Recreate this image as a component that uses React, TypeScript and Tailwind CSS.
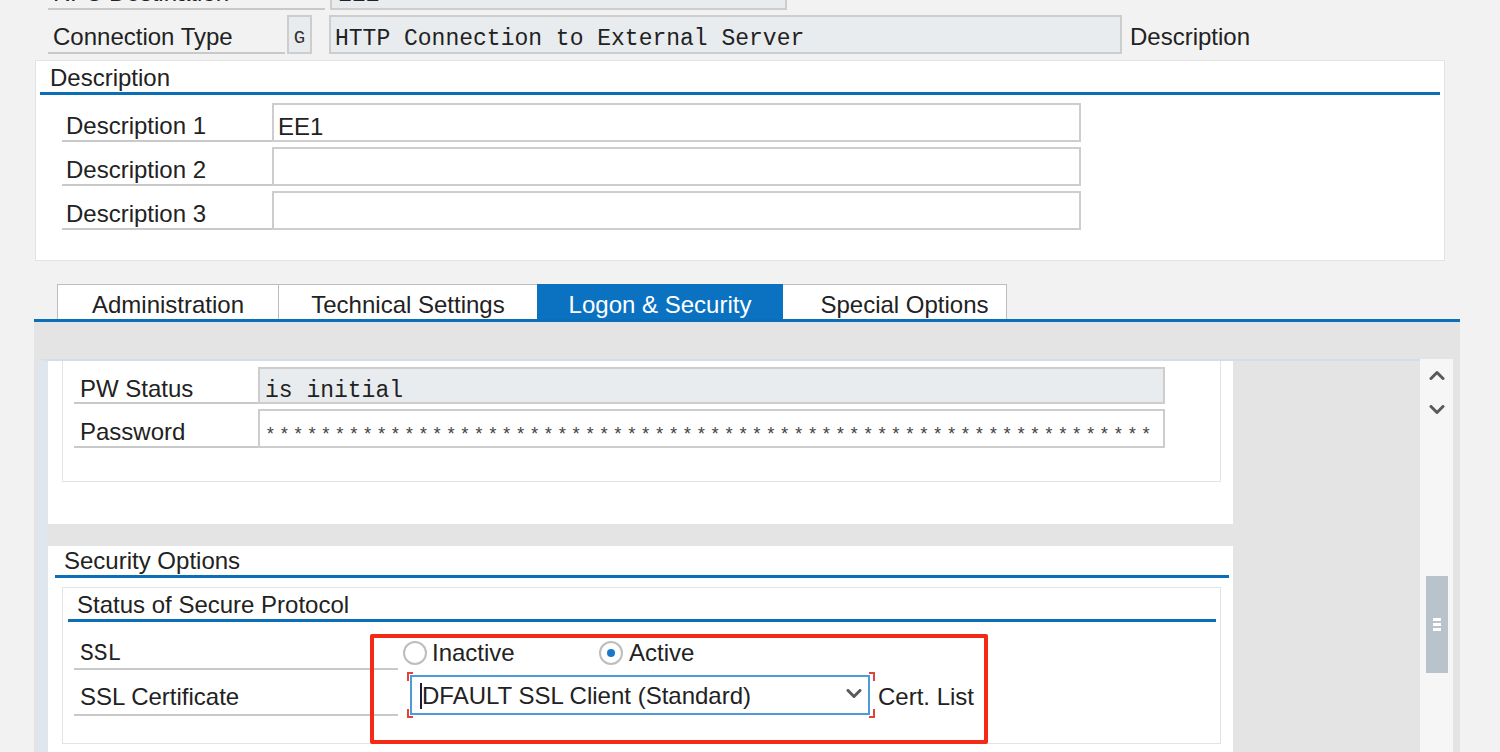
import React from "react";

const mono = "font-['Liberation_Mono','Courier_New',monospace]";

function Chevron({ up }: { up?: boolean }) {
  return (
    <svg width="16" height="10" viewBox="0 0 16 10" fill="none">
      <path
        d={up ? "M2 8.5 L8 2.5 L14 8.5" : "M2 1.5 L8 7.5 L14 1.5"}
        stroke="#5a5a5a"
        strokeWidth="3"
        strokeLinecap="round"
        strokeLinejoin="round"
      />
    </svg>
  );
}

export default function App() {
  const stars = "*".repeat(64);
  return (
    <div className="relative w-[1500px] h-[752px] overflow-hidden bg-[#f2f2f2] font-['Liberation_Sans',Arial,sans-serif] text-[24px] leading-none text-[#222]">
      <div className="flex flex-col h-full">
        {/* header rows */}
        <div className="pl-[48px] -mt-[29px] flex flex-col gap-[5px]">
          <div className="flex h-[39px]">
            <div className="w-[277px] border-b-2 border-[#c9c9c9] pl-[5px] pt-[6px] flex items-center">RFC Destination</div>
            <div className={`ml-[5px] w-[457px] bg-[#e9ecef] border-2 border-[#cdcdcd] flex items-center pl-[6px] pt-[10px] text-[23px] ${mono}`}>EE1</div>
          </div>
          <div className="flex h-[39px]">
            <div className="w-[237px] border-b-2 border-[#c9c9c9] pl-[5px] pt-[6px] flex items-center">Connection Type</div>
            <div className={`ml-[2px] w-[25px] bg-[#e9ecef] border-2 border-[#cdcdcd] flex items-center justify-center pt-[8px] text-[19px] text-[#333] ${mono}`}>G</div>
            <div className={`ml-[17px] w-[793px] bg-[#e9ecef] border-2 border-[#cdcdcd] flex items-center pl-[4px] pt-[10px] text-[23px] ${mono}`}>HTTP Connection to External Server</div>
            <div className="ml-[8px] pt-[4px] flex items-center">Description</div>
          </div>
        </div>

        {/* Description group */}
        <div className="mt-[6px] ml-[35px] w-[1410px] h-[201px] shrink-0 bg-white border border-[#e3e3e3]">
          <div className="h-[31px] pl-[14px] pt-[2px] flex items-center">Description</div>
          <div className="mx-[4px] h-[3px] bg-[#0b6fb8]" />
          <div className="mt-[8px] pl-[26px] flex flex-col gap-[5px]">
            {["Description 1", "Description 2", "Description 3"].map((l, i) => (
              <div key={l} className="flex h-[39px]">
                <div className="w-[210px] border-b-2 border-[#c9c9c9] pl-[4px] pt-[8px] flex items-center">{l}</div>
                <div className="w-[809px] border-2 border-[#cdcdcd] bg-white pl-[4px] pt-[8px] flex items-center">{i === 0 ? "EE1" : ""}</div>
              </div>
            ))}
          </div>
        </div>

        {/* tabs */}
        <div className="mt-[23px] ml-[34px] w-[1426px] border-b-[3px] border-[#0b6fb8] pl-[23px] flex shrink-0">
          <div className="w-[221px] h-[35px] pt-[6px] bg-white border-t border-l border-[#bdbdbd] flex items-center justify-center">Administration</div>
          <div className="w-[259px] h-[35px] pt-[6px] bg-white border-t border-l border-[#bdbdbd] flex items-center justify-center">Technical Settings</div>
          <div className="w-[246px] h-[35px] pt-[6px] bg-[#0b72c2] text-white flex items-center justify-center">Logon &amp; Security</div>
          <div className="w-[224px] h-[35px] pt-[6px] bg-white border-t border-r border-[#bdbdbd] flex items-center justify-center pl-[20px]">Special Options</div>
        </div>

        {/* tab body */}
        <div className="ml-[34px] w-[1426px] flex-1 bg-[#e4e4e4] pt-[37px] pl-[4px] flex">
          <div className="w-[1382px] border-t-2 border-l-[10px] border-t-[#d2dfeb] border-l-[#dfe6ed] flex flex-col">
            {/* card 1 */}
            <div className="w-[1185px] h-[163px] bg-white shrink-0">
              <div className="ml-[14px] w-[1159px] h-[121px] border-l border-r border-b border-[#e3e3e3] pt-[6px] pl-[11px] flex flex-col gap-[5px]">
                <div className="flex h-[37px]">
                  <div className="w-[184px] border-b-2 border-[#c9c9c9] pl-[6px] pt-[8px] flex items-center">PW Status</div>
                  <div className={`w-[907px] bg-[#e9ecef] border-2 border-[#cdcdcd] pl-[5px] pt-[12px] flex items-center text-[23px] ${mono}`}>is initial</div>
                </div>
                <div className="flex h-[39px]">
                  <div className="w-[184px] border-b-2 border-[#c9c9c9] pl-[6px] pt-[9px] flex items-center">Password</div>
                  <div className={`w-[907px] bg-white border-2 border-[#cdcdcd] pl-[5px] flex items-center pt-[12px] text-[18px] tracking-[3.1px] text-[#444] overflow-hidden whitespace-nowrap ${mono}`}>{stars}</div>
                </div>
              </div>
            </div>
            {/* card 2 */}
            <div className="mt-[22px] w-[1185px] flex-1 bg-white">
              <div className="h-[29px] pl-[16px] pt-[1px] flex items-center">Security Options</div>
              <div className="ml-[7px] w-[1174px] h-[3px] bg-[#0b6fb8]" />
              <div className="mt-[9px] ml-[14px] w-[1159px] h-[157px] border border-[#e3e3e3]">
                <div className="h-[31px] pl-[14px] pt-[2px] flex items-center">Status of Secure Protocol</div>
                <div className="ml-[5px] w-[1148px] h-[3px] bg-[#0b6fb8]" />
                <div className="mt-[11px] ml-[11px] flex h-[37px]">
                  <div className={`w-[324px] border-b-2 border-[#c9c9c9] pl-[6px] pt-[8px] flex items-center text-[23px] ${mono}`}>SSL</div>
                  <div className="ml-[5px] pt-[2px] flex items-center">
                    <div className="w-[196px] flex items-center">
                      <div className="w-[24px] h-[24px] rounded-full border-2 border-[#bdbdbd] bg-white" />
                      <span className="ml-[5px]">Inactive</span>
                    </div>
                    <div className="flex items-center">
                      <div className="w-[24px] h-[24px] rounded-full border-2 border-[#bdbdbd] bg-white flex items-center justify-center">
                        <div className="w-[8px] h-[8px] rounded-full bg-[#1a78cc]" />
                      </div>
                      <span className="ml-[6px]">Active</span>
                    </div>
                  </div>
                </div>
                <div className="mt-[3px] ml-[11px] flex h-[43px]">
                  <div className="w-[324px] border-b-2 border-[#c9c9c9] pl-[6px] pt-[6px] flex items-center">SSL Certificate</div>
                  <div className="relative ml-[12px] mt-[2px] w-[460px] h-[40px] border-2 border-[#4f9ad8] flex items-center pl-[8px] pt-[1px]">
                    <div className="w-[2px] h-[26px] bg-[#1a1a40]" />
                    <span>DFAULT SSL Client (Standard)</span>
                    <div className="absolute right-[6px] top-[12px]">
                      <Chevron />
                    </div>
                    <div className="absolute -left-[5px] -top-[5px] w-[6px] h-[9px] border-l-2 border-t-2 border-[#e0443c]" />
                    <div className="absolute -left-[5px] -bottom-[5px] w-[6px] h-[9px] border-l-2 border-b-2 border-[#e0443c]" />
                    <div className="absolute -right-[7px] -top-[5px] w-[6px] h-[9px] border-r-2 border-t-2 border-[#e0443c]" />
                    <div className="absolute -right-[7px] -bottom-[5px] w-[6px] h-[9px] border-r-2 border-b-2 border-[#e0443c]" />
                  </div>
                  <div className="ml-[8px] mt-[2px] pt-[2px] flex items-center">Cert. List</div>
                </div>
              </div>
            </div>
          </div>
          {/* scrollbar */}
          <div className="w-[33px] bg-[#f6f6f6] flex flex-col items-center pt-[11px]">
            <Chevron up />
            <div className="mt-[25px]">
              <Chevron />
            </div>
            <div className="mt-[161px] w-[22px] h-[97px] bg-[#b9c3cc] flex flex-col items-center justify-center gap-[2px]">
              <div className="w-[8px] h-[3px] bg-white" />
              <div className="w-[8px] h-[3px] bg-white" />
              <div className="w-[8px] h-[3px] bg-white" />
            </div>
          </div>
        </div>
      </div>

      {/* annotation */}
      <div className="absolute left-[370px] top-[634px] w-[618px] h-[110px] border-[4px] border-[#f42a17] rounded-[2px]" />
    </div>
  );
}
